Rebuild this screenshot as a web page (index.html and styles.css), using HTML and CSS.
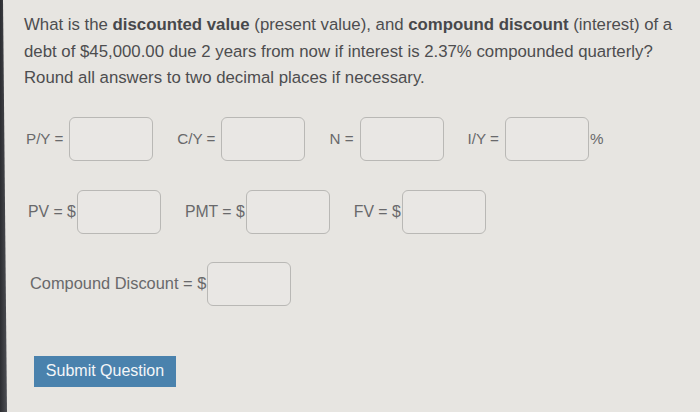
FILE: index.html
```html
<!DOCTYPE html>
<html>
<head>
<meta charset="utf-8">
<link rel="stylesheet" href="styles.css">
</head>
<body>
<div class="screen">
  <div class="bezel"></div>
  <main class="page">
    <p class="question">What is the <b>discounted value</b> (present value), and <b>compound discount</b> (interest) of a<br>debt of $45,000.00 due 2 years from now if interest is 2.37% compounded quarterly?<br>Round all answers to two decimal places if necessary.</p>

    <div class="row row-one">
      <label class="field"><span class="lbl">P/Y =</span><span class="box"></span></label>
      <label class="field"><span class="lbl">C/Y =</span><span class="box"></span></label>
      <label class="field"><span class="lbl">N =</span><span class="box"></span></label>
      <label class="field"><span class="lbl">I/Y =</span><span class="box"></span><span class="unit">%</span></label>
    </div>

    <div class="row row-two">
      <label class="field"><span class="lbl tight">PV = $</span><span class="box"></span></label>
      <label class="field"><span class="lbl tight">PMT = $</span><span class="box"></span></label>
      <label class="field"><span class="lbl tight">FV = $</span><span class="box"></span></label>
    </div>

    <div class="row row-three">
      <label class="field"><span class="lbl tight big">Compound Discount = $</span><span class="box"></span></label>
    </div>

    <button class="submit">Submit Question</button>
  </main>
</div>
</body>
</html>
```

FILE: styles.css
```css
html, body {
  margin: 0;
  padding: 0;
  background: #e7e5e1;
}
.screen {
  display: flex;
  width: 700px;
  height: 412px;
  overflow: hidden;
}
.bezel {
  width: 7px;
  flex: none;
  background: linear-gradient(to right, #2b2c30, #4e4f54);
  clip-path: polygon(0 0, 3px 0, 7px 100%, 0 100%);
}
.page {
  flex: 1;
  padding: 12px 0 0 17px;
  font-family: "Liberation Sans", Arial, sans-serif;
  color: #4d4d4f;
}
.question {
  margin: 0;
  font-size: 16.8px;
  line-height: 26.5px;
  white-space: nowrap;
}
.question b {
  font-weight: bold;
  color: #47484b;
}
.row {
  display: flex;
  align-items: center;
  gap: 24px;
  padding-left: 2px;
}
.row-one {
  margin-top: 25px;
}
.row-two {
  margin-top: 29px;
  padding-left: 4px;
}
.row-three {
  margin-top: 28px;
  padding-left: 6px;
}
.field {
  display: flex;
  align-items: center;
}
.lbl {
  font-size: 15.2px;
  color: #69696b;
  margin-right: 6px;
}
.lbl.tight {
  margin-right: 1px;
  font-size: 15.8px;
}
.lbl.big {
  font-size: 16.4px;
}
.box {
  display: block;
  width: 82px;
  height: 42px;
  border: 1px solid #b9b8b5;
  border-radius: 6px;
  background: #e9e7e4;
}
.unit {
  font-size: 15.2px;
  color: #69696b;
  margin-left: 1px;
}
.submit {
  display: block;
  margin: 50px 0 0 10px;
  width: 142px;
  height: 31px;
  border: none;
  background: #4a82ad;
  color: #f4f6f8;
  font-family: "Liberation Sans", Arial, sans-serif;
  font-size: 16px;
  padding: 0;
}
```
